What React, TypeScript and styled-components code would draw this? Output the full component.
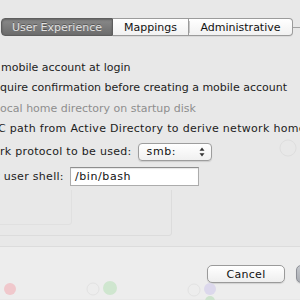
import React from 'react'
import styled, { createGlobalStyle } from 'styled-components'

const GlobalStyle = createGlobalStyle`
  html, body {
    margin: 0;
    padding: 0;
    background: #e8e8e8;
  }
  body {
    font-family: 'DejaVu Sans', 'Liberation Sans', sans-serif;
    font-size: 11px;
    color: #1c1c1c;
  }
`

const Window = styled.div`
  position: relative;
  width: 300px;
  height: 300px;
  overflow: hidden;
  background: #e8e8e8;
`

const Body = styled.div`
  height: 247px;
  padding-top: 18px;
  box-sizing: border-box;
  border-bottom: 1px solid #dcdcdc;
`

const TabRow = styled.div`
  display: flex;
  align-items: center;
  height: 18px;
  padding-left: 1px;
`

const Segment = styled.div<{ $active?: boolean; $first?: boolean; $last?: boolean; $width: number }>`
  width: ${(p) => p.$width}px;
  height: 18px;
  box-sizing: border-box;
  display: flex;
  align-items: center;
  justify-content: center;
  font-size: 11px;
  white-space: nowrap;
  border: 1px solid ${(p) => (p.$active ? '#5e5e5e' : '#9b9b9b')};
  border-left: ${(p) => (p.$first ? undefined : 'none')};
  border-radius: ${(p) => (p.$first ? '4px 0 0 4px' : p.$last ? '0 4px 4px 0' : '0')};
  background: ${(p) =>
    p.$active
      ? 'linear-gradient(#8a8a8a, #6c6c6c)'
      : 'linear-gradient(#ffffff, #f1f1f1)'};
  color: ${(p) => (p.$active ? '#e2e2e2' : '#111')};
  text-shadow: ${(p) => (p.$active ? '0 -1px 0 rgba(0,0,0,0.35)' : 'none')};
  box-shadow: ${(p) => (p.$active ? 'inset 0 1px 2px rgba(0,0,0,0.3)' : '0 1px 0 rgba(0,0,0,0.06)')};
`

const Divider = styled.span`
  width: 1px;
  height: 12px;
  background: #c6c6c6;
  margin-right: -1px;
  position: relative;
  z-index: 1;
`

const TabLine = styled.div`
  flex: 1;
  height: 1px;
  background: #a3a3a3;
`

const Options = styled.div`
  padding-top: 21px;
  display: flex;
  flex-direction: column;
`

const Row = styled.div<{ $h: number; $dim?: boolean; $wide?: boolean }>`
  display: flex;
  align-items: center;
  height: ${(p) => p.$h}px;
  white-space: nowrap;
  letter-spacing: ${(p) => (p.$wide ? '0.3px' : '0')};
  color: ${(p) => (p.$dim ? '#8e8e8e' : '#1c1c1c')};
`

/* zero-width box: its content hangs off to the left, clipped by the window */
const Lead = styled.div<{ $shift?: number }>`
  width: 0;
  display: flex;
  justify-content: flex-end;
  align-items: center;
  margin-left: ${(p) => p.$shift ?? 0}px;
  flex-shrink: 0;
`

const Check = styled.span`
  width: 12px;
  height: 12px;
  box-sizing: border-box;
  border: 1px solid #8a8a8a;
  border-radius: 2px;
  background: linear-gradient(#fff, #ececec);
  margin-right: 6px;
  flex-shrink: 0;
`

const Popup = styled.div`
  width: 74px;
  height: 18px;
  box-sizing: border-box;
  margin-left: 6px;
  display: flex;
  align-items: center;
  justify-content: space-between;
  padding: 0 6px 0 8px;
  border: 1px solid #9d9d9d;
  border-radius: 4px;
  background: linear-gradient(#ffffff, #f0f0f0);
  box-shadow: 0 1px 1px rgba(0, 0, 0, 0.12);
  color: #111;
  letter-spacing: 0.6px;
`

const Field = styled.div`
  width: 129px;
  height: 19px;
  box-sizing: border-box;
  margin-left: 6px;
  padding-left: 4px;
  display: flex;
  align-items: center;
  background: #fff;
  border: 1px solid #acacac;
  border-top-color: #8e8e8e;
  box-shadow: inset 0 1px 1px rgba(0, 0, 0, 0.1);
  color: #111;
  letter-spacing: 0.6px;
`

const Footer = styled.div`
  height: 52px;
  background: #ededed;
  display: flex;
  justify-content: flex-start;
  align-items: flex-start;
  padding: 18px 0 0 207px;
  box-sizing: border-box;
  gap: 11px;
`

const Button = styled.div<{ $width: number; $default?: boolean }>`
  width: ${(p) => p.$width}px;
  height: 18px;
  flex-shrink: 0;
  box-sizing: border-box;
  display: flex;
  align-items: center;
  justify-content: center;
  border: 1px solid ${(p) => (p.$default ? '#8d8f96' : '#9a9a9a')};
  border-radius: 5px;
  background: ${(p) =>
    p.$default ? 'linear-gradient(#c4c7cc, #a9acb2)' : 'linear-gradient(#ffffff, #eeeeee)'};
  box-shadow: 0 1px 1px rgba(0, 0, 0, 0.12);
  color: #111;
  letter-spacing: 0.3px;
`

const Ghost = styled.svg`
  position: absolute;
  left: 0;
  top: 0;
  pointer-events: none;
`

const Arrows = () => (
  <svg width="6" height="10" viewBox="0 0 6 10">
    <path d="M3 0.5 L5.5 3.8 H0.5 Z" fill="#333" />
    <path d="M3 9.5 L5.5 6.2 H0.5 Z" fill="#333" />
  </svg>
)

const App = () => (
  <Window>
    <GlobalStyle />
    <Body>
      <TabRow>
        <Segment $active $first $width={112}>User Experience</Segment>
        <Segment $width={76}>Mappings</Segment>
        <Divider />
        <Segment $last $width={104}>Administrative</Segment>
        <TabLine />
      </TabRow>
      <Options>
        <Row $h={20}>
          <Lead $shift={1}>
            <Check />
            Create&nbsp;
          </Lead>
          mobile account at login
        </Row>
        <Row $h={21}>
          <Lead>
            <Check />
            Re
          </Lead>
          quire confirmation before creating a mobile account
        </Row>
        <Row $h={20} $dim>
          <Lead $shift={-3}>
            <Check />
            Force&nbsp;
          </Lead>
          local home directory on startup disk
        </Row>
        <Row $h={20} $wide>
          <Lead $shift={-2}>
            <Check />
            Use UN
          </Lead>
          C path from Active Directory to derive network home location
        </Row>
        <Row $h={27} $wide>
          <Lead>Netwo</Lead>
          rk protocol to be used:
          <Popup>
            smb:
            <Arrows />
          </Popup>
        </Row>
        <Row $h={23} $wide>
          <Lead>
            <Check />
            Default
          </Lead>
          &nbsp;user shell:
          <Field>/bin/bash</Field>
        </Row>
      </Options>
    </Body>
    <Footer>
      <Button $width={78}>Cancel</Button>
      <Button $default $width={70}>OK</Button>
    </Footer>
    <Ghost width="300" height="300" viewBox="0 0 300 300">
      <path d="M0 235.5 H169 Q171.5 235.5 171.5 233 V190" fill="none" stroke="#dcdcdc" />
      <path d="M0 224.5 H69 Q71.5 224.5 71.5 222 V190" fill="none" stroke="#e0e0e0" />
      <circle cx="288" cy="148" r="8" fill="none" stroke="#dedede" />
      <circle cx="10" cy="289" r="6" fill="#f0c8cc" />
      <circle cx="93" cy="289" r="6" fill="none" stroke="#e2e2e2" />
      <circle cx="110" cy="288" r="7" fill="#cfe6cf" />
      <circle cx="194" cy="290" r="6" fill="none" stroke="#e2e2e2" />
      <circle cx="210" cy="289" r="6" fill="#dcd8ec" />
      <circle cx="210" cy="301" r="5" fill="#cde3cd" />
    </Ghost>
  </Window>
)

export default App
